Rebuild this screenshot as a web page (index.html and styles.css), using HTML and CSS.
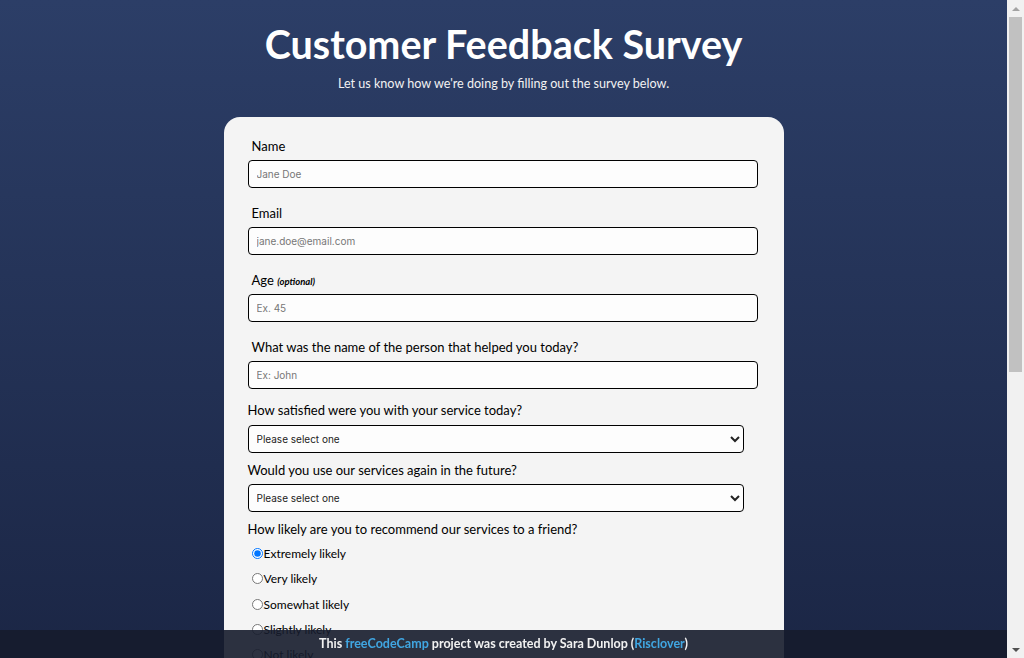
FILE: index.html
```html
<!DOCTYPE html>
<html lang="en">
<head>
<meta charset="utf-8">
<title>Customer Feedback Survey</title>
<link rel="stylesheet" href="styles.css">
</head>
<body>
<header class="header">
  <h1 class="title">Customer Feedback Survey</h1>
  <p class="description">Let us know how we're doing by filling out the survey below.</p>
</header>
<main class="card">
  <form class="form">
    <div class="field">
      <label class="label" for="name">Name</label>
      <input class="input" id="name" type="text" placeholder="Jane Doe">
    </div>
    <div class="field">
      <label class="label" for="email">Email</label>
      <input class="input" id="email" type="email" placeholder="jane.doe@email.com">
    </div>
    <div class="field">
      <label class="label" for="age">Age <span class="optional">(optional)</span></label>
      <input class="input" id="age" type="number" placeholder="Ex. 45">
    </div>
    <div class="field field-last">
      <label class="label" for="helper">What was the name of the person that helped you today?</label>
      <input class="input" id="helper" type="text" placeholder="Ex: John">
    </div>
    <div class="sfield sfield-first">
      <label class="slabel" for="satisfied">How satisfied were you with your service today?</label>
      <select class="select" id="satisfied">
        <option>Please select one</option>
        <option>Very satisfied</option>
        <option>Satisfied</option>
        <option>Unsatisfied</option>
      </select>
    </div>
    <div class="sfield">
      <label class="slabel" for="again">Would you use our services again in the future?</label>
      <select class="select" id="again">
        <option>Please select one</option>
        <option>Yes</option>
        <option>Maybe</option>
        <option>No</option>
      </select>
    </div>
    <div class="group">
      <p class="slabel">How likely are you to recommend our services to a friend?</p>
      <div class="options">
        <label class="option"><input type="radio" name="rec" checked>Extremely likely</label>
        <label class="option"><input type="radio" name="rec">Very likely</label>
        <label class="option"><input type="radio" name="rec">Somewhat likely</label>
        <label class="option"><input type="radio" name="rec">Slightly likely</label>
        <label class="option"><input type="radio" name="rec">Not likely</label>
      </div>
    </div>
    <div class="group">
      <p class="slabel">What would you like to see improved? (Check all that apply)</p>
      <div class="options">
        <label class="option"><input type="checkbox">Wait times</label>
        <label class="option"><input type="checkbox">Customer service</label>
        <label class="option"><input type="checkbox">Pricing</label>
        <label class="option"><input type="checkbox">Product quality</label>
        <label class="option"><input type="checkbox">Website</label>
        <label class="option"><input type="checkbox">Other</label>
      </div>
    </div>
    <div class="sfield">
      <label class="slabel" for="comments">Any comments or suggestions?</label>
      <textarea class="textarea" id="comments" placeholder="Enter your comments here..."></textarea>
    </div>
    <button class="submit" type="submit">Submit</button>
  </form>
</main>
<footer class="footer">
  This <a href="#" class="link">freeCodeCamp</a> project was created by Sara Dunlop (<a href="#" class="link">Risclover</a>)
</footer>
<div class="scrollbar" aria-hidden="true">
  <div class="sb-btn"><span class="sb-up"></span></div>
  <div class="sb-track"><div class="sb-thumb"></div></div>
  <div class="sb-btn"><span class="sb-down"></span></div>
</div>
</body>
</html>
```

FILE: styles.css
```css
html {
  background: linear-gradient(#2c3e67, #1b2645) fixed;
  min-height: 100%;
}
body {
  margin: 0;
  padding: 0 17px 90px 0;
  font-family: Lato, "Noto Sans", sans-serif;
  color: #000;
}
.header {
  text-align: center;
  color: #fff;
  padding-top: 20px;
}
.title {
  margin: 0;
  font-size: 39.5px;
  font-weight: 700;
  line-height: 48px;
}
.description {
  margin: 7px 0 0;
  font-size: 12.6px;
  line-height: 17px;
  color: #f2f2f2;
}
.card {
  width: 560px;
  margin: 25px auto 0;
  background: #f4f4f4;
  border-radius: 16px;
  box-sizing: border-box;
  padding: 20px 26px 40px 24px;
}
.form {
  display: flex;
  flex-direction: column;
}
.field {
  display: flex;
  flex-direction: column;
  gap: 6px;
  margin-bottom: 16px;
}
.field-last {
  margin-bottom: 12px;
}
.label {
  font-size: 13px;
  line-height: 19px;
  height: 17px;
  padding-left: 4px;
}
.optional {
  font-size: 9.5px;
  font-style: italic;
  font-weight: 700;
  line-height: 1;
}
.input {
  width: 510px;
  height: 28px;
  box-sizing: border-box;
  border: 1.5px solid #000;
  border-radius: 4px;
  background: #fdfdfd;
  padding: 0 8px;
  font-family: Inter, "Liberation Sans", sans-serif;
  font-size: 10px;
  color: #222;
}
.input::placeholder {
  color: #777;
}
.sfield {
  display: flex;
  flex-direction: column;
  gap: 6px;
  margin-bottom: 8px;
}
.sfield-first {
  gap: 7px;
}
.slabel {
  margin: 0;
  font-size: 13px;
  line-height: 19px;
  height: 17px;
}
.select {
  width: 496px;
  height: 28px;
  box-sizing: border-box;
  border: 1.5px solid #000;
  border-radius: 4px;
  background: #fdfdfd;
  padding: 0 4px;
  font-family: Inter, "Liberation Sans", sans-serif;
  font-size: 10px;
  color: #222;
}
.group {
  margin-bottom: 12px;
}
.options {
  display: flex;
  flex-direction: column;
  margin-top: 4px;
}
.option {
  display: block;
  font-size: 12px;
  line-height: 25.3px;
  height: 25.3px;
}
.option input {
  margin: 0 1px 0 4px;
  width: 11px;
  height: 11px;
  vertical-align: -1px;
}
.textarea {
  width: 510px;
  height: 110px;
  box-sizing: border-box;
  border: 1.5px solid #000;
  border-radius: 4px;
  background: #fdfdfd;
  padding: 8px;
  font-family: Inter, "Liberation Sans", sans-serif;
  font-size: 10px;
  resize: none;
}
.submit {
  margin-top: 14px;
  align-self: center;
  width: 200px;
  height: 36px;
  border: none;
  border-radius: 6px;
  background: #2c3e67;
  color: #fff;
  font-family: Lato, sans-serif;
  font-size: 15px;
  font-weight: 700;
}
.footer {
  position: fixed;
  left: 0;
  right: 17px;
  bottom: 0;
  height: 28px;
  line-height: 27px;
  text-align: center;
  background: rgba(22, 28, 44, 0.9);
  color: #f2f2f2;
  font-size: 12.5px;
  font-weight: 700;
}
.link {
  color: #40a6e2;
  text-decoration: none;
}
.scrollbar {
  position: fixed;
  top: 0;
  right: 0;
  bottom: 0;
  width: 17px;
  background: #f1f1f1;
  display: flex;
  flex-direction: column;
}
.sb-btn {
  height: 17px;
  flex: none;
  display: flex;
  align-items: center;
  justify-content: center;
}
.sb-up {
  width: 0;
  height: 0;
  border-left: 4px solid transparent;
  border-right: 4px solid transparent;
  border-bottom: 4px solid #a3a3a3;
}
.sb-down {
  width: 0;
  height: 0;
  border-left: 4px solid transparent;
  border-right: 4px solid transparent;
  border-top: 4px solid #505050;
}
.sb-track {
  flex: 1;
  padding: 0 2px;
}
.sb-thumb {
  height: 355px;
  background: #c1c1c1;
}
```
